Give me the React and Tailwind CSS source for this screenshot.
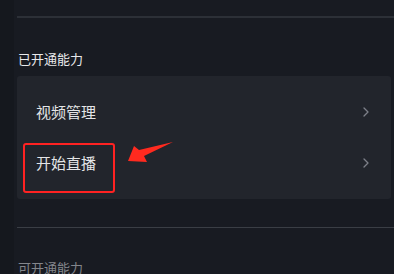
import React from "react";

const font = { fontFamily: '"Noto Sans CJK SC", "Noto Sans", sans-serif' };

function Chevron() {
  return (
    <svg width="8" height="12" viewBox="0 0 8 12" fill="none">
      <path d="M2 2l4 4-4 4" stroke="#7d8089" strokeWidth="1.3" strokeLinecap="round" strokeLinejoin="round" />
    </svg>
  );
}

function Row({ label }) {
  return (
    <div className="h-[51px] flex items-center justify-between pl-[19px] pr-[21px]">
      <span className="text-[15px] leading-none text-[#e4e5e7]">{label}</span>
      <Chevron />
    </div>
  );
}

export default function App() {
  return (
    <div className="relative w-[394px] h-[274px] overflow-hidden bg-[#181b22] flex" style={font}>
      {/* left strip */}
      <div className="w-[14px] h-full bg-[#15181e]" />

      <div className="flex-1 pl-[3px] flex flex-col">
        <div className="h-[16px] shrink-0" />
        <div className="h-[2px] shrink-0 bg-[#2c3037]" />

        <div className="h-[32px] shrink-0" />
        <p className="shrink-0 pl-[1px] text-[13px] leading-[18px] text-[#e8e9eb]">已开通能力</p>

        <div className="shrink-0 mt-[8px] mr-[3px] pt-[10px] pb-[11px] rounded-[3px] bg-[#22252c]">
          <Row label="视频管理" />
          <Row label="开始直播" />
        </div>

        <div className="h-[28px] shrink-0" />
        <div className="h-px shrink-0 bg-[#3a3e45]" />

        <p className="shrink-0 mt-[31px] pl-[1px] text-[13px] leading-[18px] text-[#83868c]">可开通能力</p>
      </div>

      {/* annotation */}
      <div className="absolute left-[23px] top-[143px] w-[92px] h-[50px] border-2 border-[#ff2222] rounded-[3px]" />
      <svg className="absolute left-[120px] top-[136px]" width="60" height="32" viewBox="0 0 60 32">
        <path d="M8 25 L14 10 L19 14 L53 6 L24 20 L27 26 Z" fill="#ff2a1f" />
      </svg>
    </div>
  );
}
